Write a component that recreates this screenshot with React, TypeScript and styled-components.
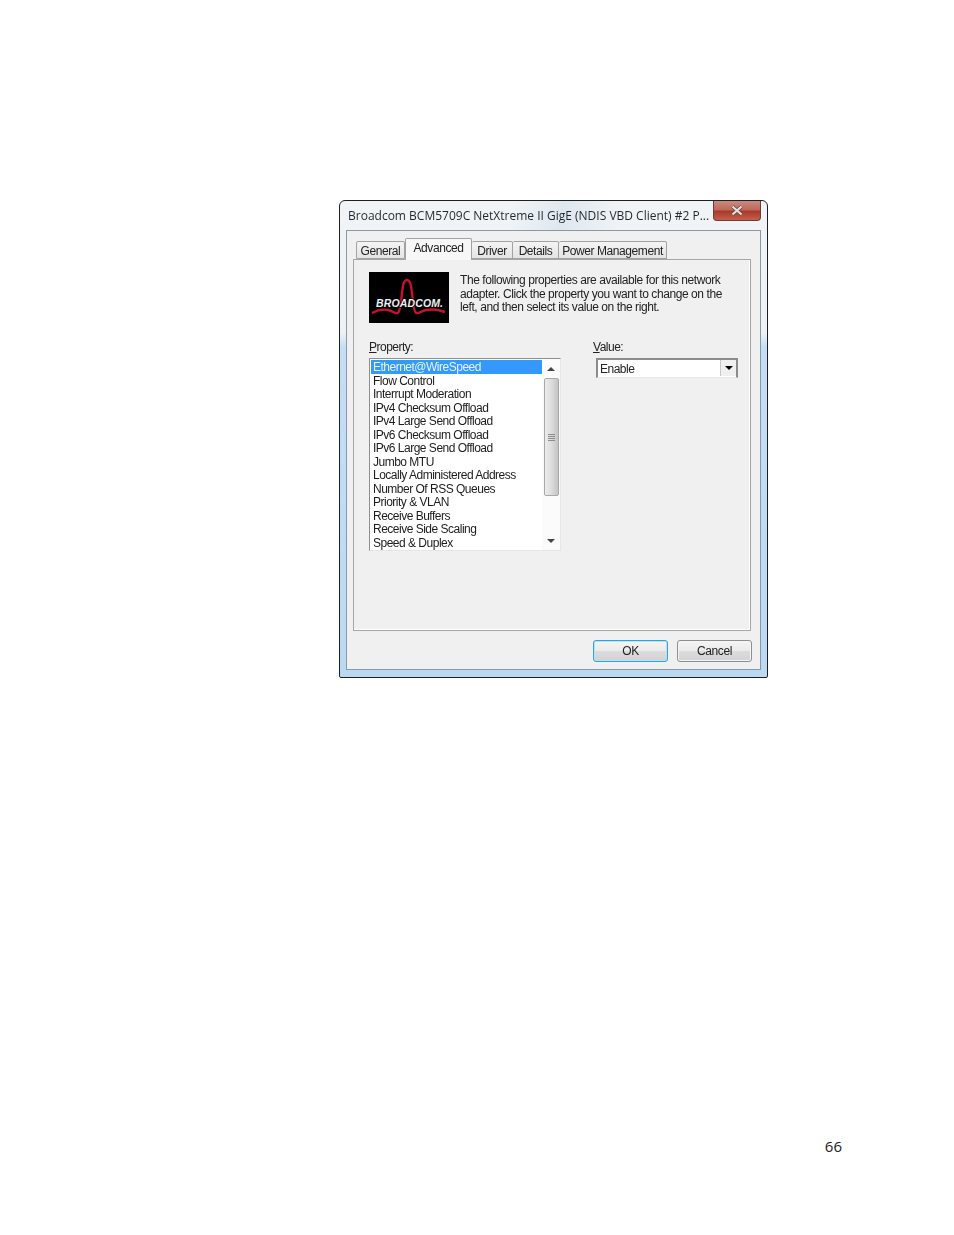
import styled, { createGlobalStyle } from 'styled-components';

const PROPERTIES = [
  'Ethernet@WireSpeed',
  'Flow Control',
  'Interrupt Moderation',
  'IPv4 Checksum Offload',
  'IPv4 Large Send Offload',
  'IPv6 Checksum Offload',
  'IPv6 Large Send Offload',
  'Jumbo MTU',
  'Locally Administered Address',
  'Number Of RSS Queues',
  'Priority & VLAN',
  'Receive Buffers',
  'Receive Side Scaling',
  'Speed & Duplex',
];

const TABS = [
  { label: 'General', width: 49 },
  { label: 'Advanced', width: 67 },
  { label: 'Driver', width: 41 },
  { label: 'Details', width: 46 },
  { label: 'Power Management', width: 108 },
];

const GlobalStyle = createGlobalStyle`
  html, body {
    margin: 0;
    padding: 0;
    background: #fff;
  }
`;

const Page = styled.main`
  width: 954px;
  height: 1235px;
  padding: 200px 0 0 339px;
  box-sizing: border-box;
  font-family: 'Liberation Sans', Arial, sans-serif;
  overflow: hidden;
`;

const Dialog = styled.section`
  width: 429px;
  height: 478px;
  box-sizing: border-box;
  border: 1px solid #1c1f24;
  border-radius: 6px 6px 2px 2px;
  background: linear-gradient(#f1f4f6 0, #eef2f5 132px, #c4def6 146px, #bcd9f3 100%);
  filter: blur(0.35px);
`;

const TitleBar = styled.header`
  height: 29px;
  display: flex;
  justify-content: space-between;
  align-items: flex-start;
  padding: 0 6px 0 8px;
  background: linear-gradient(100deg, transparent 40%, #dfe7ee 52%, transparent 66%);
`;

const Title = styled.h1`
  margin: 7px 0 0;
  font-size: 12px;
  line-height: 15px;
  font-weight: 400;
  font-family: 'Open Sans', 'Liberation Sans', sans-serif;
  color: #1f2830;
  white-space: nowrap;
`;

const CloseButton = styled.div`
  flex: none;
  width: 48px;
  height: 20px;
  box-sizing: border-box;
  border: 1px solid #6b3d38;
  border-top: 0;
  border-radius: 0 0 4px 4px;
  background: linear-gradient(#c98a80 0%, #c0695c 45%, #a93a2b 55%, #c45f4c 100%);
  display: flex;
  align-items: center;
  justify-content: center;
`;

const Client = styled.div`
  width: 415px;
  height: 440px;
  margin-left: 6px;
  box-sizing: border-box;
  border: 1px solid #8a98a6;
  background: #f0f0f0;
  padding: 7px 8px 0 6px;
`;

const TabRow = styled.nav`
  height: 21px;
  display: flex;
  align-items: flex-end;
  padding-left: 3px;
  position: relative;
  z-index: 1;
`;

const Tab = styled.div<{ $active?: boolean; $width: number }>`
  width: ${(props) => props.$width}px;
  height: ${(props) => (props.$active ? 22 : 18)}px;
  margin-bottom: ${(props) => (props.$active ? -1 : 0)}px;
  box-sizing: border-box;
  border: 1px solid #a2a2a2;
  border-bottom: ${(props) => (props.$active ? '0' : '1px solid #a2a2a2')};
  border-left-width: ${(props) => (props.$active ? 1 : 0)}px;
  border-radius: 2px 2px 0 0;
  background: ${(props) => (props.$active ? '#f7f7f7' : 'linear-gradient(#f4f4f4, #e4e4e4)')};
  font-size: 12px;
  letter-spacing: -0.42px;
  line-height: ${(props) => (props.$active ? 19 : 18)}px;
  text-align: center;
  color: #222;
  white-space: nowrap;

  &:first-child {
    border-left-width: 1px;
  }
`;

const TabPane = styled.div`
  width: 398px;
  height: 372px;
  box-sizing: border-box;
  border: 1px solid #a6a6a6;
  box-shadow: inset -1px -1px 0 #fff;
  padding: 12px 15px;
  background: #f0f0f0;
`;

const Intro = styled.div`
  display: flex;
  gap: 11px;
  height: 68px;
`;

const Logo = styled.svg`
  width: 80px;
  height: 51px;
  display: block;
  flex: none;
`;

const IntroText = styled.p`
  margin: 2px 0 0;
  font-size: 12px;
  line-height: 13.5px;
  color: #222;
  letter-spacing: -0.42px;
  white-space: nowrap;
`;

const Columns = styled.div`
  display: flex;
  gap: 32px;
`;

const PropertyColumn = styled.div`
  width: 192px;
`;

const ValueColumn = styled.div`
  width: 146px;
`;

const FieldLabel = styled.div`
  font-size: 12px;
  line-height: 14px;
  letter-spacing: -0.5px;
  color: #222;
  margin-bottom: 4px;
`;

const ListBox = styled.div`
  width: 192px;
  height: 193px;
  box-sizing: border-box;
  display: flex;
  background: #fff;
  border: 1px solid #8f8f8f;
  border-right-color: #e6e6e6;
  border-bottom-color: #e6e6e6;
`;

const Items = styled.ul`
  list-style: none;
  margin: 0;
  padding: 1px 0 0 1px;
  width: 171px;
  overflow: hidden;
`;

const Item = styled.li<{ $selected?: boolean }>`
  height: 13.5px;
  line-height: 14px;
  padding-left: 2px;
  font-size: 12px;
  letter-spacing: -0.5px;
  white-space: nowrap;
  color: ${(props) => (props.$selected ? '#e8f2ff' : '#1c1c1c')};
  background: ${(props) => (props.$selected ? '#3399ff' : 'transparent')};
`;

const ScrollBar = styled.div`
  width: 18px;
  display: flex;
  flex-direction: column;
  align-items: center;
  background: #fbfbfb;
`;

const ArrowCell = styled.div`
  height: 19px;
  display: flex;
  align-items: center;
  justify-content: center;
  flex: none;
`;

const Arrow = styled.div<{ $down?: boolean; $dark?: boolean }>`
  width: 0;
  height: 0;
  border-left: 4px solid transparent;
  border-right: 4px solid transparent;
  border-${(props) => (props.$down ? 'top' : 'bottom')}: 4px solid ${(props) => (props.$dark ? '#000' : '#444')};
`;

const Thumb = styled.div`
  width: 15px;
  height: 118px;
  flex: none;
  box-sizing: border-box;
  border: 1px solid #a8a8a8;
  border-radius: 2px;
  background: linear-gradient(90deg, #ececec, #dcdcdc 50%, #c4c4c4);
  display: flex;
  flex-direction: column;
  align-items: center;
  justify-content: center;
  gap: 1px;
`;

const Grip = styled.span`
  width: 7px;
  height: 1px;
  background: #8c8c8c;
`;

const ScrollGap = styled.div`
  flex: 1;
`;

const Combo = styled.div`
  width: 142px;
  height: 20px;
  margin-left: 3px;
  box-sizing: border-box;
  display: flex;
  background: #fff;
  border: 2px solid #8c8c8c;
  border-bottom: 1px solid #e8e8e8;
`;

const ComboValue = styled.div`
  flex: 1;
  padding-left: 2px;
  font-size: 12px;
  letter-spacing: -0.5px;
  line-height: 19px;
  color: #222;
`;

const ComboButton = styled.div`
  width: 16px;
  height: 16px;
  box-sizing: border-box;
  display: flex;
  align-items: center;
  justify-content: center;
  background: #f0f0f0;
  border-left: 1px solid #c9c9c9;
`;

const Footer = styled.footer`
  display: flex;
  justify-content: flex-end;
  gap: 9px;
  padding-top: 9px;
`;

const Button = styled.div<{ $primary?: boolean }>`
  width: 75px;
  height: 22px;
  box-sizing: border-box;
  border: 1px solid ${(props) => (props.$primary ? '#3c9fd0' : '#8e8e8e')};
  border-radius: 3px;
  box-shadow: inset 0 0 0 1px ${(props) => (props.$primary ? '#b4e4f8' : '#f6f6f6')};
  background: linear-gradient(#f4f4f4 0%, #ebebeb 48%, #dcdcdc 52%, #d2d2d2 100%);
  font-size: 12px;
  letter-spacing: -0.4px;
  line-height: 20px;
  text-align: center;
  color: #222;
`;

const PageNumber = styled.div`
  width: 503px;
  margin-top: 460px;
  text-align: right;
  font-family: 'Open Sans', sans-serif;
  font-size: 15px;
  line-height: 16px;
  color: #222;
`;

export default function App() {
  return (
    <Page>
      <GlobalStyle />
      <Dialog>
        <TitleBar>
          <Title>Broadcom BCM5709C NetXtreme II GigE (NDIS VBD Client) #2 P...</Title>
          <CloseButton>
            <svg width="14" height="11" viewBox="0 0 14 11">
              <path d="M2.5 1.5 L11.5 9.5 M11.5 1.5 L2.5 9.5" stroke="#5a4442" strokeWidth="3.6" />
              <path d="M2.5 1.5 L11.5 9.5 M11.5 1.5 L2.5 9.5" stroke="#e4e0de" strokeWidth="2.2" />
            </svg>
          </CloseButton>
        </TitleBar>
        <Client>
          <TabRow>
            {TABS.map((tab) => (
              <Tab key={tab.label} $width={tab.width} $active={tab.label === 'Advanced'}>
                {tab.label}
              </Tab>
            ))}
          </TabRow>
          <TabPane>
            <Intro>
              <Logo viewBox="0 0 80 51">
                <rect width="80" height="51" fill="#000" />
                <path
                  d="M3 41 C9 38 14 37 19 38 C24 39 26 42 29 41 C32 39 32 25 34 14 C35 9 36 8 38 8 C40 8 41 9 42 14 C44 25 44 39 47 41 C50 42 52 39 57 38 C63 37 70 38 76 40"
                  fill="none"
                  stroke="#c8102e"
                  strokeWidth="2.4"
                />
                <text
                  x="7"
                  y="34.5"
                  textLength="67"
                  fill="#f0f0f0"
                  fontFamily="'Liberation Sans', sans-serif"
                  fontSize="10.5"
                  fontWeight="700"
                  fontStyle="italic"
                  stroke="#000"
                  strokeWidth="1.6"
                  paintOrder="stroke"
                >
                  BROADCOM.
                </text>
              </Logo>
              <IntroText>
                The following properties are available for this network
                <br />
                adapter. Click the property you want to change on the
                <br />
                left, and then select its value on the right.
              </IntroText>
            </Intro>
            <Columns>
              <PropertyColumn>
                <FieldLabel>
                  <u>P</u>roperty:
                </FieldLabel>
                <ListBox>
                  <Items>
                    {PROPERTIES.map((property, index) => (
                      <Item key={property} $selected={index === 0}>
                        {property}
                      </Item>
                    ))}
                  </Items>
                  <ScrollBar>
                    <ArrowCell>
                      <Arrow />
                    </ArrowCell>
                    <Thumb>
                      <Grip />
                      <Grip />
                      <Grip />
                      <Grip />
                    </Thumb>
                    <ScrollGap />
                    <ArrowCell>
                      <Arrow $down />
                    </ArrowCell>
                  </ScrollBar>
                </ListBox>
              </PropertyColumn>
              <ValueColumn>
                <FieldLabel>
                  <u>V</u>alue:
                </FieldLabel>
                <Combo>
                  <ComboValue>Enable</ComboValue>
                  <ComboButton>
                    <Arrow $down $dark />
                  </ComboButton>
                </Combo>
              </ValueColumn>
            </Columns>
          </TabPane>
          <Footer>
            <Button $primary>OK</Button>
            <Button>Cancel</Button>
          </Footer>
        </Client>
      </Dialog>
      <PageNumber>66</PageNumber>
    </Page>
  );
}
